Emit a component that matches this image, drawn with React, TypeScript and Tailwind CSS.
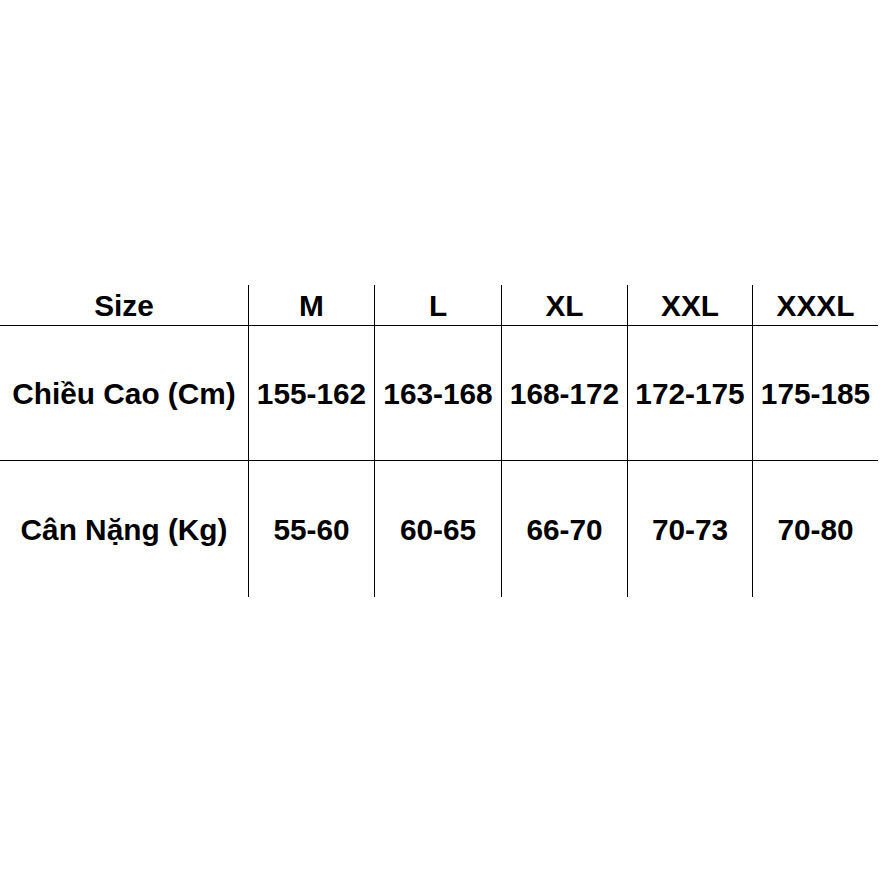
import React from "react";

const cols = ["w-[248px]", "w-[126px]", "w-[127px]", "w-[126px]", "w-[125px]", "w-[126px]"];

const rows: { cells: string[]; h: string; border: boolean }[] = [
  { cells: ["Size", "M", "L", "XL", "XXL", "XXXL"], h: "h-[41px]", border: true },
  { cells: ["Chiều Cao (Cm)", "155-162", "163-168", "168-172", "172-175", "175-185"], h: "h-[135px]", border: true },
  { cells: ["Cân Nặng (Kg)", "55-60", "60-65", "66-70", "70-73", "70-80"], h: "h-[136px]", border: false },
];

export default function App() {
  return (
    <div
      className="w-[882px] h-[882px] bg-white flex flex-col justify-center text-black"
      style={{ fontFamily: '"Liberation Sans", Arial, sans-serif' }}
    >
      <div className="flex flex-col w-[878px]">
        {rows.map((r, ri) => (
          <div key={ri} className={`flex ${r.h} ${r.border ? "border-b border-black" : ""}`}>
            {r.cells.map((c, ci) => (
              <div
                key={ci}
                className={`${cols[ci]} shrink-0 flex items-center justify-center text-[29.8px] leading-none pt-[2px] font-bold whitespace-nowrap ${ci > 0 ? "border-l border-black" : ""}`}
              >
                {c}
              </div>
            ))}
          </div>
        ))}
      </div>
    </div>
  );
}
